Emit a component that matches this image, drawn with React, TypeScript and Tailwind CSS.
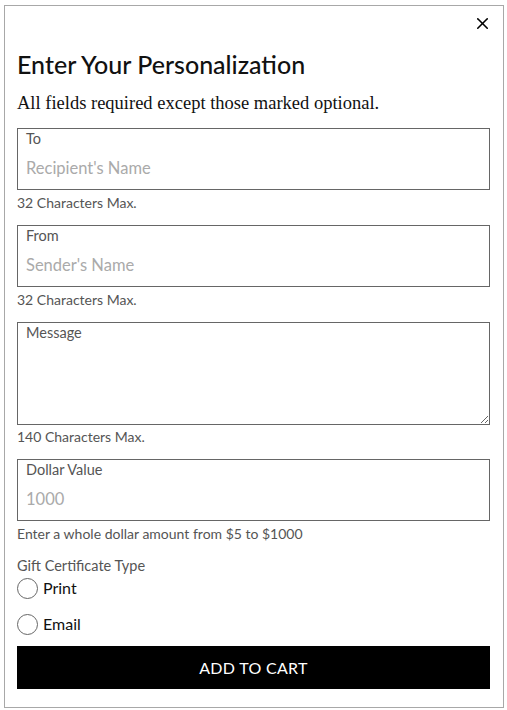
import { X } from 'lucide-react'

const sans = "font-['Lato','Open_Sans',sans-serif]"

type FieldProps = {
  label: string
  placeholder: string
  help: string
}

const Field = ({ label, placeholder, help }: FieldProps) => {
  return (
    <div>
      <label className="flex h-[62px] flex-col border border-[#666] px-2 pt-[1px]">
        <span className="text-[14.5px] leading-[18px] text-[#555]">{label}</span>
        <input
          placeholder={placeholder}
          className="mt-[10px] w-full text-[16.5px] leading-[20px] text-[#222] outline-none placeholder:text-[#aaa]"
        />
      </label>
      <p className="mt-[5px] text-[14px] leading-[16px] text-[#555]">{help}</p>
    </div>
  )
}

const App = () => {
  return (
    <div className={`min-h-[710px] bg-white pt-[5px] pl-[4px] ${sans}`}>
      <div className="flex h-[703px] w-[500px] flex-col border border-[#a8a8a8] pl-[12px] pr-[13px]">
        <div className="flex justify-end pt-[8px]">
          <button className="-mr-[2px] text-black">
            <X size={19} strokeWidth={2} />
          </button>
        </div>

        <h2 className="mt-[16px] text-[25px] leading-[30px] font-medium text-[#111]">
          Enter Your Personalization
        </h2>
        <p className="mt-[13px] font-['Liberation_Serif',serif] text-[18.5px] leading-[22px] text-[#111]">
          All fields required except those marked optional.
        </p>

        <div className="mt-[14px] flex flex-col gap-[14px]">
          <Field label="To" placeholder="Recipient's Name" help="32 Characters Max." />
          <Field label="From" placeholder="Sender's Name" help="32 Characters Max." />

          <div>
            <label className="flex h-[103px] flex-col border border-[#666]">
              <span className="px-2 pt-[1px] text-[14.5px] leading-[18px] text-[#555]">Message</span>
              <textarea className="w-full flex-1 resize-y px-2 text-[16px] text-[#222] outline-none" />
            </label>
            <p className="mt-[4px] text-[14px] leading-[16px] text-[#555]">140 Characters Max.</p>
          </div>

          <Field
            label="Dollar Value"
            placeholder="1000"
            help="Enter a whole dollar amount from $5 to $1000"
          />
        </div>

        <p className="mt-[15px] text-[14.5px] leading-[18px] text-[#555]">Gift Certificate Type</p>
        <div className="mt-[2px] flex flex-col gap-[14px]">
          {['Print', 'Email'].map((opt) => (
            <label key={opt} className="flex items-center gap-[5px] text-[16px] leading-[22px] text-[#111]">
              <span className="h-[21px] w-[21px] rounded-full border border-[#666]" />
              {opt}
            </label>
          ))}
        </div>

        <button className="mt-[11px] h-[43px] w-full bg-black text-[16px] tracking-[0.3px] text-white">
          ADD TO CART
        </button>
      </div>
    </div>
  )
}

export default App
